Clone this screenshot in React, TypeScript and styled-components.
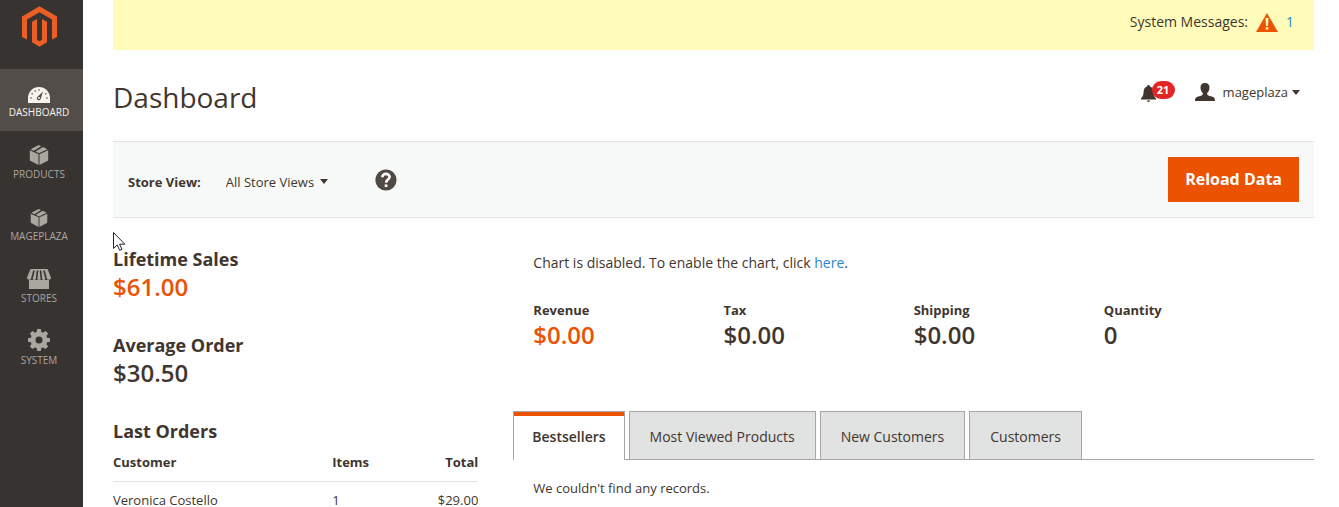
import React from "react";
import styled, { createGlobalStyle } from "styled-components";

const ink = "#41362f";
const orange = "#eb5202";
const link = "#2a86cf";

const GlobalStyle = createGlobalStyle`
  * { box-sizing: border-box; }
  html { scrollbar-width: none; }
  body {
    margin: 0;
    background: #fefefe;
    color: ${ink};
    font: 13px/18px "Open Sans", sans-serif;
  }
  a { color: ${link}; text-decoration: none; }
  h1, h2, p { margin: 0; }
  svg { display: block; flex: none; }
`;

const Page = styled.div`
  display: flex;
  min-height: 100vh;
`;

const Sidebar = styled.aside`
  flex: none;
  width: 83px;
  background: #373330;
`;

const LogoLink = styled.a`
  display: flex;
  justify-content: center;
  height: 69px;
  padding: 6px 4px 0 0;
`;

const NavLink = styled.a<{ $active?: boolean }>`
  display: flex;
  flex-direction: column;
  align-items: center;
  gap: 2px;
  height: 62px;
  padding: 10px 5px 0 0;
  background: ${(p) => (p.$active ? "#524d49" : "transparent")};
  color: ${(p) => (p.$active ? "#f7f3eb" : "#aaa6a0")};
  font-size: 10px;
  line-height: 14px;
  text-transform: uppercase;
`;

const NavIcon = styled.span`
  display: flex;
  align-items: flex-end;
  height: 24px;
`;

const Main = styled.main`
  flex: 1;
  min-width: 0;
  padding: 0 25px 0 30px;
`;

const SystemMessages = styled.div`
  display: flex;
  align-items: center;
  justify-content: flex-end;
  height: 50px;
  padding: 0 20px 6px 0;
  background: #fffbbb;
  font-size: 14px;
  gap: 8px;
`;

const PageHeader = styled.header`
  display: flex;
  align-items: center;
  justify-content: space-between;
  height: 91px;
  padding: 2px 14px 0 0;
`;

const PageTitle = styled.h1`
  font-size: 28px;
  line-height: 36px;
  font-weight: 400;
`;

const UserTools = styled.div`
  display: flex;
  align-items: center;
  gap: 20px;
  padding-bottom: 9px;
`;

const PlainButton = styled.button`
  display: flex;
  align-items: center;
  gap: 4px;
  padding: 0;
  border: 0;
  background: none;
  color: inherit;
  font: inherit;
`;

const BellButton = styled(PlainButton)`
  position: relative;
  width: 34px;
  height: 20px;
  align-items: flex-end;
`;

const Badge = styled.span`
  position: absolute;
  top: -1px;
  right: 0;
  width: 23px;
  height: 18px;
  border-radius: 9px;
  background: #e22626;
  color: #fff;
  font-size: 11px;
  line-height: 18px;
  font-weight: 700;
  text-align: center;
`;

const UserName = styled.span`
  padding-left: 4px;
`;

const Toolbar = styled.section`
  display: flex;
  align-items: center;
  height: 77px;
  padding: 0 15px;
  border: solid #e3e3e3;
  border-width: 1px 0;
  background: #f7f9f8;
`;

const ToolbarLabel = styled.label`
  margin-right: 25px;
  padding-top: 4px;
  font-weight: 700;
`;

const SelectBox = styled.span`
  display: flex;
  align-items: center;
  gap: 5px;
  margin-right: 47px;
  padding-top: 4px;
`;

const Select = styled.select`
  appearance: none;
  padding: 0;
  border: 0;
  background: none;
  color: inherit;
  font: inherit;
`;

const PrimaryButton = styled.button`
  height: 45px;
  margin-left: auto;
  padding: 0 17px 2px;
  border: 0;
  background: ${orange};
  color: #fff;
  font: 700 16px/24px "Open Sans", sans-serif;
`;

const Columns = styled.div`
  display: grid;
  grid-template-columns: minmax(0, 1fr) minmax(0, 2fr);
`;

const Summary = styled.div`
  padding: 29px 35px 0 0;
`;

const Block = styled.section`
  margin-bottom: 30px;
`;

const BlockTitle = styled.h2`
  font-size: 18px;
  line-height: 24px;
  font-weight: 700;
`;

const Amount = styled.p<{ $accent?: boolean }>`
  color: ${(p) => (p.$accent ? orange : ink)};
  font-size: 24px;
  line-height: 32px;
  font-weight: 600;
`;

const OrdersTable = styled.table`
  width: 100%;
  border-collapse: collapse;
  table-layout: fixed;
  th, td {
    padding: 0;
    text-align: left;
    font-size: 13px;
  }
  th {
    height: 38px;
    border-bottom: 1px solid #e3e3e3;
    font-weight: 700;
  }
  td { height: 38px; }
  th:first-child { width: 60%; }
  th:last-child, td:last-child { text-align: right; }
`;

const Details = styled.div`
  padding-top: 36px;
`;

const ChartNote = styled.p`
  padding: 0 20px;
  font-size: 14px;
`;

const Totals = styled.dl`
  display: grid;
  grid-template-columns: repeat(4, 1fr);
  margin: 29px 20px 60px;
  dt { font-weight: 700; }
  dd { margin: 0; }
`;

const TabList = styled.div`
  display: flex;
  gap: 4px;
  border-bottom: 1px solid #a6a6a6;
`;

const Tab = styled.button<{ $active?: boolean }>`
  height: ${(p) => (p.$active ? "49px" : "48px")};
  margin-bottom: ${(p) => (p.$active ? "-1px" : "0")};
  padding: ${(p) => (p.$active ? "2px 18px 0" : "3px 20px 0")};
  border: 1px solid #a6a6a6;
  border-bottom: 0;
  background: ${(p) => (p.$active ? "#fefefe" : "#e1e3e2")};
  box-shadow: ${(p) => (p.$active ? `inset 0 4px ${orange}` : "none")};
  color: ${ink};
  font: ${(p) => (p.$active ? 600 : 400)} 14px/20px "Open Sans", sans-serif;
`;

const TabPanel = styled.div`
  padding: 19px 20px 0;
`;

const Pointer = styled.svg`
  position: absolute;
  left: 113px;
  top: 232px;
`;

const Caret = () => (
  <svg width="8" height="5" viewBox="0 0 8 5" fill={ink} aria-hidden="true">
    <path d="M0 0h8L4 5z" />
  </svg>
);

const MagentoLogo = () => (
  <svg width="35" height="41" viewBox="22 6 35 41" fill="#eb5f25" aria-hidden="true">
    <path d="M39.5 6.3 57 16.5V37l-5 2.6V19.4l-12.5-7.2L27 19.4v20.2L22 37V16.5z" />
    <path d="M37 19v20.8l2.5 1.4 2.5-1.4V19l5 2.8v20.5l-7.500 4.400-7.500-4.400V21.800z" />
  </svg>
);

const GaugeIcon = () => (
  <svg width="22" height="16" viewBox="0 0 22 16" aria-hidden="true">
    <path fill="#f7f3eb" d="M0 16v-5a11 11 0 0 1 22 0v5z" />
    <path fill="#524d49" d="m15 4.500-2.200 7a2 2 0 1 1-3.200-1.800z" />
    <circle cx="11" cy="11" r="1" fill="#f7f3eb" />
    <g fill="#524d49">
      <circle cx="3" cy="11" r=".8" />
      <circle cx="4.200" cy="6.800" r=".8" />
      <circle cx="7.200" cy="4" r=".8" />
      <circle cx="11" cy="3" r=".8" />
      <circle cx="17.800" cy="6.800" r=".8" />
      <circle cx="19" cy="11" r=".8" />
    </g>
  </svg>
);

const BoxIcon = ({ size }: { size: number }) => (
  <svg width={size} height={size} viewBox="0 0 20 20" fill="currentColor" aria-hidden="true">
    <path d="M.8 5.200 9.500 9.200V20L.8 15.400zM19.200 5.200l-8.700 4V20l8.700-4.600z" />
    <path d="m9.600 0 2.600 1.200-7.400 4.500-3.200-1.500zM14 2l4.500 2.200-8.500 4L6.500 6.500z" />
  </svg>
);

const StoreIcon = () => (
  <svg width="24" height="20" viewBox="0 0 24 20" aria-hidden="true">
    <path fill="currentColor" d="M3.500 0h17L24 8.500c0 2.500-3.600 3.200-4.800.8-1 2.300-4 2.300-4.800 0-1 2.300-3.800 2.300-4.800 0-1 2.300-3.900 2.300-4.800 0C3.600 11.700 0 11 0 8.500z" />
    <path fill="currentColor" d="M2 11h20v9H2z" />
    <path stroke="#373330" strokeWidth="1.600" fill="none" d="M7 1.500 4.800 10M10.500 1.500l-.9 8.500M13.500 1.500l.9 8.500M17 1.500l2.200 8.500" />
  </svg>
);

const GearIcon = () => (
  <svg width="22" height="22" viewBox="0 0 22 22" fill="currentColor" aria-hidden="true">
    <path
      fillRule="evenodd"
      d="M9.200 0h3.600l.6 3 1.600.7L17.600 2l2.500 2.500-1.700 2.500.7 1.700 2.900.5v3.600l-2.900.5-.7 1.700 1.700 2.500-2.500 2.600-2.600-1.700-1.600.7-.6 2.900H9.200l-.6-2.900-1.600-.7-2.600 1.700-2.500-2.600L3.600 15l-.7-1.700-2.900-.5V9.200l2.900-.5L3.600 7 1.900 4.500 4.400 2 7 3.700 8.600 3zM11 7.500a3.500 3.500 0 1 0 0 7 3.500 3.500 0 0 0 0-7z"
    />
  </svg>
);

const WarningIcon = () => (
  <svg width="22" height="19" viewBox="0 0 22 19" aria-hidden="true">
    <path fill={orange} d="M11 0 22 19H0z" />
    <path fill="#fffbbb" d="M9.500 5h3l-.5 8h-2zM9.700 14.200h2.600v2.400H9.700z" />
  </svg>
);

const BellIcon = () => (
  <svg width="15" height="17" viewBox="0 0 15 17" fill={ink} aria-hidden="true">
    <path d="M7.500 0c.8 0 1.200.5 1.200 1.200C11.500 2 12.300 4.400 12.400 7c.1 3.300 1 4.600 2.600 6.500v1H0v-1C1.600 11.600 2.500 10.300 2.600 7c.1-2.600.9-5 3.700-5.800C6.300.5 6.700 0 7.500 0zM6 15.500h3c0 .8-.7 1.500-1.500 1.500S6 16.300 6 15.500z" />
  </svg>
);

const UserIcon = () => (
  <svg width="20" height="18" viewBox="0 0 20 18" fill={ink} aria-hidden="true">
    <path d="M10 0c3 0 4.600 1.800 4.500 4.600-.1 2.400-.9 4.400-2.300 5.400-.3 1.700.3 2.200 1.800 2.700l3.500 1.100C19.200 14.400 20 15.400 20 18H0c0-2.600.8-3.600 2.500-4.200L6 12.700c1.500-.5 2.100-1 1.800-2.700C6.400 9 5.600 7 5.500 4.600 5.400 1.800 7 0 10 0z" />
  </svg>
);

const HelpIcon = () => (
  <svg width="22" height="22" viewBox="0 0 22 22" aria-hidden="true">
    <circle cx="11" cy="11" r="10.600" fill="#514943" />
    <path fill="none" stroke="#fff" strokeWidth="2.600" d="M7.300 8.300C7.300 3.600 14.700 3.900 14.600 8c0 2.600-3.500 2.600-3.500 5.700" />
    <path fill="#fff" d="M9.700 15.400h2.700v2.600H9.700z" />
  </svg>
);

const navItems = [
  { label: "Dashboard", icon: <GaugeIcon />, active: true },
  { label: "Products", icon: <BoxIcon size={20} /> },
  { label: "Mageplaza", icon: <BoxIcon size={18} /> },
  { label: "Stores", icon: <StoreIcon /> },
  { label: "System", icon: <GearIcon /> },
];

const totals = [
  { label: "Revenue", value: "$0.00", accent: true },
  { label: "Tax", value: "$0.00" },
  { label: "Shipping", value: "$0.00" },
  { label: "Quantity", value: "0" },
];

const tabs = ["Bestsellers", "Most Viewed Products", "New Customers", "Customers"];

export default function App() {
  return (
    <Page>
      <GlobalStyle />
      <Sidebar>
        <LogoLink href="#" aria-label="Magento admin">
          <MagentoLogo />
        </LogoLink>
        <nav>
          {navItems.map((item) => (
            <NavLink key={item.label} href="#" $active={item.active}>
              <NavIcon>{item.icon}</NavIcon>
              {item.label}
            </NavLink>
          ))}
        </nav>
      </Sidebar>
      <Main>
        <SystemMessages>
          <span>System Messages:</span>
          <WarningIcon />
          <a href="#">1</a>
        </SystemMessages>
        <PageHeader>
          <PageTitle>Dashboard</PageTitle>
          <UserTools>
            <BellButton aria-label="Notifications">
              <BellIcon />
              <Badge>21</Badge>
            </BellButton>
            <PlainButton>
              <UserIcon />
              <UserName>mageplaza</UserName>
              <Caret />
            </PlainButton>
          </UserTools>
        </PageHeader>
        <Toolbar>
          <ToolbarLabel htmlFor="store-view">Store View:</ToolbarLabel>
          <SelectBox>
            <Select id="store-view">
              <option>All Store Views</option>
            </Select>
            <Caret />
          </SelectBox>
          <PlainButton aria-label="Help">
            <HelpIcon />
          </PlainButton>
          <PrimaryButton>Reload Data</PrimaryButton>
        </Toolbar>
        <Columns>
          <Summary>
            <Block>
              <BlockTitle>Lifetime Sales</BlockTitle>
              <Amount $accent>$61.00</Amount>
            </Block>
            <Block>
              <BlockTitle>Average Order</BlockTitle>
              <Amount>$30.50</Amount>
            </Block>
            <section>
              <BlockTitle>Last Orders</BlockTitle>
              <OrdersTable>
                <thead>
                  <tr>
                    <th>Customer</th>
                    <th>Items</th>
                    <th>Total</th>
                  </tr>
                </thead>
                <tbody>
                  <tr>
                    <td>Veronica Costello</td>
                    <td>1</td>
                    <td>$29.00</td>
                  </tr>
                </tbody>
              </OrdersTable>
            </section>
          </Summary>
          <Details>
            <ChartNote>
              Chart is disabled. To enable the chart, click <a href="#">here</a>.
            </ChartNote>
            <Totals>
              {totals.map((t) => (
                <div key={t.label}>
                  <dt>{t.label}</dt>
                  <Amount as="dd" $accent={t.accent}>
                    {t.value}
                  </Amount>
                </div>
              ))}
            </Totals>
            <TabList role="tablist">
              {tabs.map((name, i) => (
                <Tab key={name} role="tab" aria-selected={i === 0} $active={i === 0}>
                  {name}
                </Tab>
              ))}
            </TabList>
            <TabPanel role="tabpanel">We couldn't find any records.</TabPanel>
          </Details>
        </Columns>
      </Main>
      <Pointer width="13" height="19" viewBox="0 0 13 19" aria-hidden="true">
        <path fill="#fff" stroke="#2a2030" d="M.5.500v16l3.700-3.500 2.500 5.300 2.300-1-2.400-5.100h5.200z" />
      </Pointer>
    </Page>
  );
}
